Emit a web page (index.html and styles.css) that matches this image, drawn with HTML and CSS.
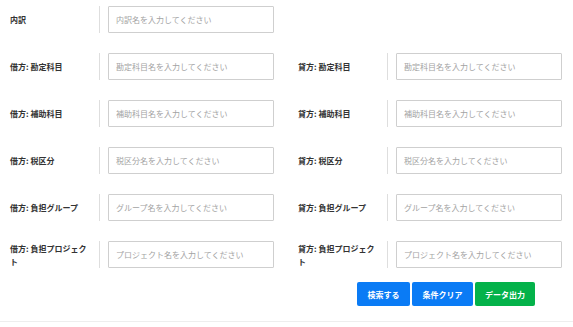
FILE: index.html
```html
<!DOCTYPE html>
<html lang="ja">
<head>
<meta charset="utf-8">
<link rel="stylesheet" href="styles.css">
</head>
<body>
<form class="search">
  <div class="grid">
    <div class="field">
      <label class="label">内訳</label>
      <div class="control"><input type="text" placeholder="内訳名を入力してください"></div>
    </div>
    <div class="field"></div>

    <div class="field">
      <label class="label">借方: 勘定科目</label>
      <div class="control"><input type="text" placeholder="勘定科目名を入力してください"></div>
    </div>
    <div class="field">
      <label class="label">貸方: 勘定科目</label>
      <div class="control"><input type="text" placeholder="勘定科目名を入力してください"></div>
    </div>

    <div class="field">
      <label class="label">借方: 補助科目</label>
      <div class="control"><input type="text" placeholder="補助科目名を入力してください"></div>
    </div>
    <div class="field">
      <label class="label">貸方: 補助科目</label>
      <div class="control"><input type="text" placeholder="補助科目名を入力してください"></div>
    </div>

    <div class="field">
      <label class="label">借方: 税区分</label>
      <div class="control"><input type="text" placeholder="税区分名を入力してください"></div>
    </div>
    <div class="field">
      <label class="label">貸方: 税区分</label>
      <div class="control"><input type="text" placeholder="税区分名を入力してください"></div>
    </div>

    <div class="field">
      <label class="label">借方: 負担グループ</label>
      <div class="control"><input type="text" placeholder="グループ名を入力してください"></div>
    </div>
    <div class="field">
      <label class="label">貸方: 負担グループ</label>
      <div class="control"><input type="text" placeholder="グループ名を入力してください"></div>
    </div>

    <div class="field">
      <label class="label">借方: 負担プロジェクト</label>
      <div class="control"><input type="text" placeholder="プロジェクト名を入力してください"></div>
    </div>
    <div class="field">
      <label class="label">貸方: 負担プロジェクト</label>
      <div class="control"><input type="text" placeholder="プロジェクト名を入力してください"></div>
    </div>
  </div>
  <div class="actions">
    <button type="button" class="btn btn-blue btn-search">検索する</button>
    <button type="button" class="btn btn-blue btn-clear">条件クリア</button>
    <button type="button" class="btn btn-green btn-export">データ出力</button>
  </div>
</form>
</body>
</html>
```

FILE: styles.css
```css
html, body {
  margin: 0;
  padding: 0;
  background: #fff;
  font-family: "Noto Sans CJK JP", "Noto Sans", sans-serif;
  color: #333;
}

.search {
  width: 573px;
  padding-top: 6px;
  border-bottom: 1px solid #eeeeee;
  padding-bottom: 15px;
}

.grid {
  display: grid;
  grid-template-columns: 288px 285px;
  grid-auto-rows: 27px;
  row-gap: 20px;
}

.field {
  display: flex;
  align-items: center;
  padding-left: 10px;
  height: 27px;
}

.label {
  width: 80px;
  margin-right: 9px;
  font-size: 8px;
  font-weight: 700;
  line-height: 13px;
  color: #333;
}

.control {
  border-left: 1px solid #dedede;
  padding-left: 8px;
  height: 27px;
}

.control input {
  display: block;
  box-sizing: border-box;
  width: 166px;
  height: 27px;
  margin: 0;
  border: 1px solid #cfcfcf;
  border-radius: 1px;
  padding: 0 7px;
  font-family: "Noto Sans CJK JP", "Noto Sans", sans-serif;
  font-size: 8px;
  color: #333;
  background: #fff;
  outline: none;
}

.control input::placeholder {
  color: #a3a3a3;
}

.actions {
  display: flex;
  justify-content: flex-end;
  gap: 2px;
  margin-top: 14px;
  padding-right: 38px;
}

.btn {
  height: 24px;
  border: none;
  border-radius: 2px;
  padding: 0;
  font-family: "Noto Sans CJK JP", "Noto Sans", sans-serif;
  font-size: 8px;
  font-weight: 700;
  color: #fff;
  cursor: pointer;
}

.btn-search { width: 53px; }
.btn-clear { width: 61px; }
.btn-export { width: 60px; }

.btn-blue { background: #0a7bf5; }
.btn-green { background: #04b24a; }
```
